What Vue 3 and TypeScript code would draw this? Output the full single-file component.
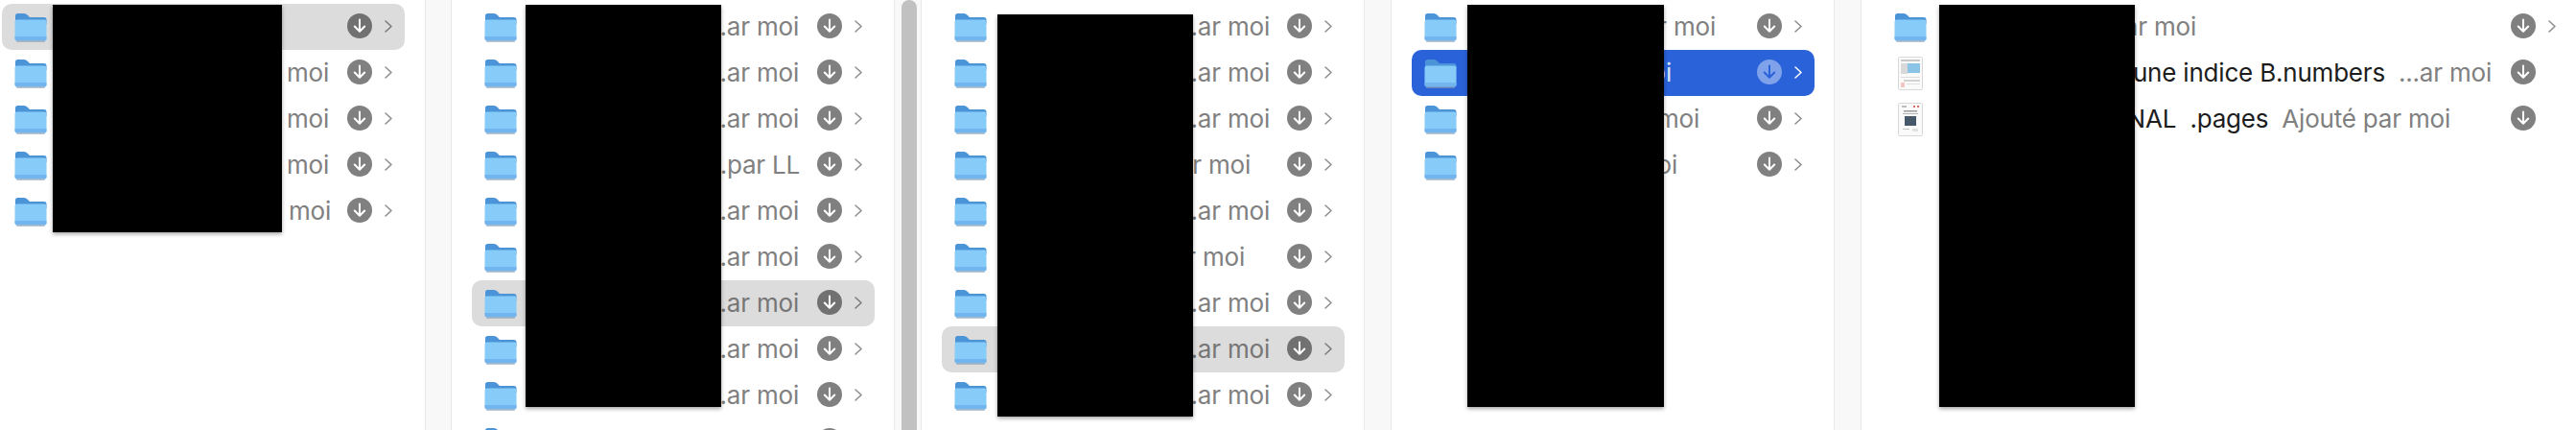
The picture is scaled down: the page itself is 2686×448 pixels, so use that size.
<script setup lang="ts">
interface Row {
  name?: string
  meta?: string
  gap?: number // space between the label and the status icon
  active?: 'grey' | 'blue'
  thumb?: 'sheet' | 'page'
}

const ME = 'Ajouté par moi'
const SHORT = '...ar moi'

const columns: { cls: string; rows: Row[] }[] = [
  {
    cls: 'first',
    rows: [
      { active: 'grey' },
      { meta: ME, gap: 19 },
      { meta: ME, gap: 19 },
      { meta: ME, gap: 19 },
      { meta: ME, gap: 17 },
    ],
  },
  {
    cls: 'scrolled',
    rows: [
      { meta: SHORT, gap: 19 },
      { meta: SHORT, gap: 19 },
      { meta: SHORT, gap: 19 },
      { meta: '...par LL', gap: 18 },
      { meta: SHORT, gap: 19 },
      { meta: SHORT, gap: 19 },
      { meta: SHORT, gap: 19, active: 'grey' },
      { meta: SHORT, gap: 19 },
      { meta: SHORT, gap: 19 },
      {},
    ],
  },
  {
    cls: '',
    rows: [
      { meta: SHORT, gap: 18 },
      { meta: SHORT, gap: 18 },
      { meta: SHORT, gap: 18 },
      { meta: ME, gap: 38 },
      { meta: SHORT, gap: 18 },
      { meta: ME, gap: 44 },
      { meta: SHORT, gap: 18 },
      { meta: SHORT, gap: 18, active: 'grey' },
      { meta: SHORT, gap: 18 },
    ],
  },
  {
    cls: '',
    rows: [
      { meta: ME, gap: 43 },
      { meta: ME, gap: 89, active: 'blue' },
      { meta: ME, gap: 60 },
      { meta: ME, gap: 83 },
    ],
  },
  {
    cls: 'last',
    rows: [
      { meta: ME, gap: 328 },
      { name: 'Planning jaune indice B.numbers', meta: SHORT, gap: 20, thumb: 'sheet' },
      { name: 'Plan FINAL  .pages', meta: ME, gap: 63, thumb: 'page' },
    ],
  },
]
</script>

<template>
  <div class="browser">
    <template v-for="(col, c) in columns" :key="c">
      <div class="column" :class="col.cls">
        <div
          v-for="(row, r) in col.rows"
          :key="r"
          class="row"
          :class="row.active"
        >
          <svg v-if="row.thumb === 'sheet'" class="thumb" viewBox="0 0 26 35">
            <rect x="0.5" y="0.5" width="25" height="34" rx="1" fill="#fafafa" stroke="#d8d8d8" />
            <rect x="3" y="3" width="20" height="2" fill="#c9c9c9" />
            <rect x="3" y="7" width="7" height="11" fill="#d9d9d9" />
            <rect x="10" y="7" width="13" height="10" fill="#8cc4e8" />
            <rect x="3" y="21" width="20" height="1" fill="#dddddd" />
            <rect x="6" y="24" width="17" height="2" fill="#d2d2d2" />
            <rect x="3" y="27" width="4" height="5" fill="#f2c6c2" />
            <rect x="9" y="28" width="14" height="1" fill="#e0e0e0" />
          </svg>
          <svg v-else-if="row.thumb === 'page'" class="thumb" viewBox="0 0 26 35">
            <rect x="0.5" y="0.5" width="25" height="34" rx="1" fill="#fafafa" stroke="#d8d8d8" />
            <rect x="4" y="3" width="5" height="2" fill="#bdbdbd" />
            <rect x="16" y="3" width="2" height="2" fill="#d46a6a" />
            <rect x="20" y="3" width="2" height="2" fill="#d46a6a" />
            <rect x="6" y="8" width="14" height="1.5" fill="#9a9a9a" />
            <rect x="5" y="11" width="16" height="1" fill="#b5b5b5" />
            <rect x="7" y="14" width="12" height="10" fill="#46596b" />
            <rect x="5" y="27" width="7" height="1" fill="#c4c4c4" />
            <rect x="15" y="27" width="6" height="3" fill="#e2e2e2" />
          </svg>
          <svg v-else class="folder" viewBox="0 0 34 31">
            <path d="M1 6.5 V3.5 Q1 1 3.5 1 H10 Q12 1 13.5 2.5 L16 5 H31 Q33.5 5 33.5 7.5 V12 H1 Z" fill="#4b94d8" />
            <path d="M0.5 9.5 Q0.5 7.5 2.5 7.5 H31.5 Q33.5 7.5 33.5 9.5 V27 Q33.5 29.5 31 29.5 H3 Q0.5 29.5 0.5 27 Z" fill="#87cbf9" />
            <path d="M0.5 25 H33.5 V27 Q33.5 29.5 31 29.5 H3 Q0.5 29.5 0.5 27 Z" fill="#72b5ee" />
            <rect x="2" y="29.5" width="30" height="1.5" rx="0.7" fill="#8f9aa6" opacity="0.6" />
          </svg>
          <span class="name">{{ row.name }}</span>
          <span
            v-if="row.meta"
            class="meta"
            :style="{ marginRight: row.gap + 'px' }"
          >{{ row.meta }}</span>
          <span class="status">
            <svg viewBox="0 0 26 26">
              <path d="M13 6.5 V18.5 M7.8 13.5 L13 18.8 L18.2 13.5" fill="none" stroke-width="2" stroke-linecap="round" stroke-linejoin="round" />
            </svg>
          </span>
          <svg v-if="!row.thumb" class="chevron" viewBox="0 0 8 13">
            <path d="M1 1 L7 6.5 L1 12" fill="none" stroke-width="1.5" stroke-linecap="round" stroke-linejoin="round" />
          </svg>
        </div>
      </div>
      <div v-if="c < columns.length - 1" class="sep" :class="col.cls">
        <div v-if="col.cls === 'scrolled'" class="scrollbar"></div>
      </div>
    </template>

    <!-- masked file names -->
    <div class="mask m1"></div>
    <div class="mask m2"></div>
    <div class="mask m3"></div>
    <div class="mask m4"></div>
    <div class="mask m5"></div>
  </div>
</template>

<style>
html,
body {
  margin: 0;
  background: #fff;
  overflow: hidden;
}
</style>

<style scoped>
.browser {
  position: relative;
  display: flex;
  width: 2686px;
  height: 448px;
  overflow: hidden;
  background: #fff;
  font-family: Inter, "Liberation Sans", sans-serif;
  font-size: 26px;
  letter-spacing: -0.2px;
}

.column {
  width: 461px;
  flex: none;
  box-sizing: border-box;
  padding: 4px 0 0 21px;
}

.column.first {
  width: 443px;
  padding-left: 2px;
}

.column.last {
  width: 745px;
}

.row {
  display: flex;
  align-items: center;
  width: 420px;
  height: 48px;
  box-sizing: border-box;
  padding: 0 0 2px 13px;
  border-radius: 10px;
  color: #1c1c1c;
  white-space: pre;
}

.last .row {
  width: 716px;
}

.row.grey {
  background: #dcdcdc;
}

.row.blue {
  background: #2a62d9;
}

.folder {
  width: 34px;
  height: 31px;
  margin-top: 2px;
  flex: none;
}

.thumb {
  width: 26px;
  height: 35px;
  margin: 2px 4px 0;
  flex: none;
  filter: blur(0.5px);
}

.name {
  flex: 1;
  min-width: 0;
  overflow: hidden;
  text-align: right;
}

.meta {
  margin-left: 14px;
  color: #808080;
  flex: none;
}

.grey .meta {
  color: #767676;
}

.blue .meta {
  color: #d8e2f8;
}

.status {
  display: block;
  width: 26px;
  height: 26px;
  flex: none;
  border-radius: 50%;
  background: #808080;
  stroke: #fff;
}

.status svg {
  display: block;
  width: 26px;
  height: 26px;
}

.grey .status {
  background: #717171;
}

.blue .status {
  background: #7fa2ea;
  stroke: #2a62d9;
}

.chevron {
  width: 8px;
  height: 13px;
  flex: none;
  margin-left: 13px;
  margin-right: 13px;
  stroke: #8c8c8c;
}

.grey .chevron {
  stroke: #7a7a7a;
}

.blue .chevron {
  stroke: #fff;
}

/* last column: file rows keep the chevron slot empty */
.row:has(.thumb) .status {
  margin-right: 34px;
}

.sep {
  width: 29px;
  height: 448px;
  flex: none;
  box-sizing: border-box;
  border-left: 1px solid #e8e8e8;
  border-right: 1px solid #e8e8e8;
  background: #f8f8f8;
}

.sep.first {
  width: 28px;
}

.sep.scrolled {
  padding-left: 7px;
}

.scrollbar {
  width: 16px;
  height: 448px;
  border-radius: 8px 8px 0 0;
  background: #c1c1c1;
}

.mask {
  position: absolute;
  background: #000;
  box-shadow: 0 2px 4px rgba(0, 0, 0, 0.35);
}

.m1 {
  left: 55px;
  top: 5px;
  width: 239px;
  height: 237px;
}

.m2 {
  left: 548px;
  top: 5px;
  width: 204px;
  height: 419px;
}

.m3 {
  left: 1040px;
  top: 15px;
  width: 204px;
  height: 419px;
}

.m4 {
  left: 1530px;
  top: 5px;
  width: 205px;
  height: 419px;
}

.m5 {
  left: 2022px;
  top: 5px;
  width: 204px;
  height: 419px;
}
</style>
